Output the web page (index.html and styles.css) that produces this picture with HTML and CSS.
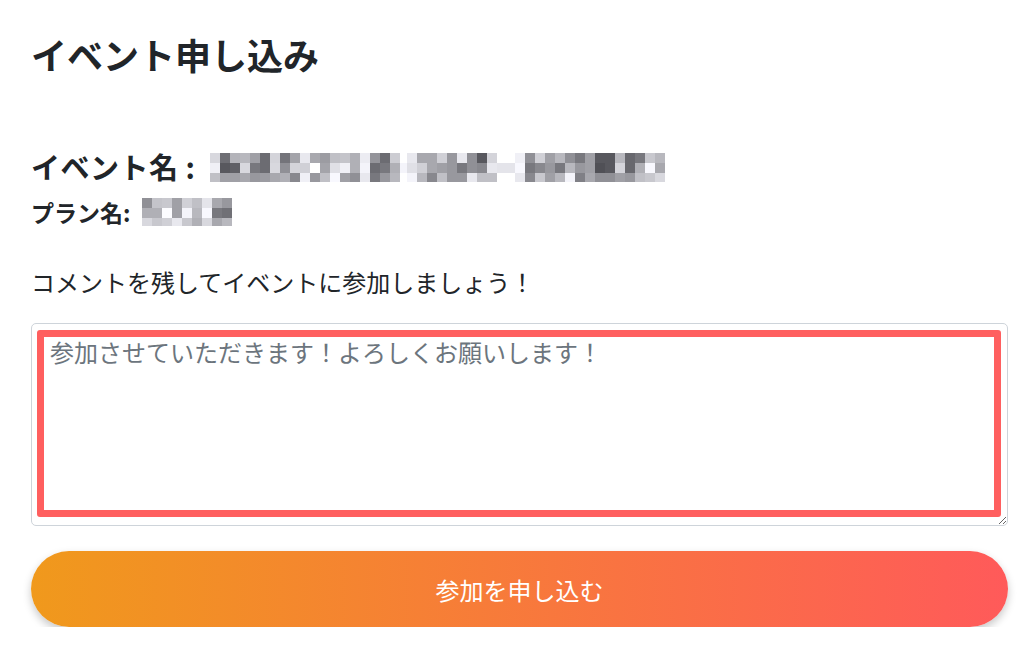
FILE: index.html
```html
<!DOCTYPE html>
<html lang="ja">
<head>
  <meta charset="UTF-8">
  <title>イベント申し込み</title>
  <meta name="viewport" content="width=device-width, initial-scale=1.0">
  <link rel="stylesheet" href="styles.css">
</head>
<body>

  <div class="page">
    <h1 class="title">イベント申し込み</h1>

    <div class="event-name">
      <span>イベント名 :</span>
      <div class="mosaic mosaic-event" data-cells="d8 6e b4 b8 a0 6c d4 74 a4 e8 a8 9c c0 c4 b0 ec 94 6c cc ff e8 a8 a8 d0 98 e8 90 58 d4 ff f0 90 d0 a0 b8 90 78 a0 58 58 b8 68 78 c8 b8|f0 58 60 d8 78 6c d8 90 d4 d0 ff a4 e0 f0 b0 f4 6c 78 b0 f4 e0 d0 a8 a0 98 78 90 88 e8 e4 f8 78 88 98 78 b8 98 a0 50 58 d4 68 b0 f8 a8|c0 a0 a0 a8 98 9c a8 b0 88 f0 98 c0 f8 a0 90 e8 78 98 b8 ff f4 b8 88 c0 98 98 e8 c0 c0 ff e8 88 c8 a0 b8 f4 80 a8 90 90 a0 98 c0 c8 d8"></div>
    </div>

    <div class="plan-name">
      <span>プラン名:</span>
      <div class="mosaic mosaic-plan" data-cells="90 c4 c8 a0 d0 c0 e4 a8 98|b0 b0 fc a0 f4 b8 f8 78 70|d8 c8 d0 e8 c8 b0 d8 a8 b8"></div>
    </div>

    <p class="lead">コメントを残してイベントに参加しましょう！</p>

    <div class="comment-box">
      <textarea class="comment" placeholder="参加させていただきます！よろしくお願いします！"></textarea>
      <div class="highlight"></div>
    </div>

    <button class="submit">参加を申し込む</button>
  </div>

  <script>
    // fill the blurred (pixelated) name blocks
    document.querySelectorAll('.mosaic').forEach(function (box) {
      const rows = box.dataset.cells.split('|');
      rows.forEach(function (row) {
        row.trim().split(' ').forEach(function (v) {
          const n = parseInt(v, 16);
          const cell = document.createElement('span');
          const blue = Math.min(255, n + 6);
          cell.style.background = 'rgb(' + n + ',' + n + ',' + blue + ')';
          box.appendChild(cell);
        });
      });
    });
  </script>

</body>
</html>
```

FILE: styles.css
```css
body {
  margin: 0;
  background: #ffffff;
  color: #212529;
  font-family: "Noto Sans CJK JP", "Noto Sans", sans-serif;
}

.page {
  width: 977px;
  padding: 32px 0 0 31px;
}

.title {
  margin: 0;
  font-size: 36px;
  line-height: 44px;
  font-weight: bold;
}

.event-name {
  display: flex;
  align-items: center;
  gap: 14px;
  margin-top: 73px;
  font-size: 29px;
  line-height: 35px;
  font-weight: bold;
  letter-spacing: 0.5px;
}

.plan-name {
  display: flex;
  align-items: center;
  gap: 12px;
  margin-top: 14px;
  font-size: 23px;
  line-height: 28px;
  font-weight: bold;
}

.mosaic {
  display: grid;
}

.mosaic-event {
  grid-template-columns: repeat(19, 10px) 7px repeat(9, 10px) 18px repeat(15, 10px);
  grid-template-rows: 10px 10px 9px;
  margin-top: 2px;
}

.mosaic-plan {
  grid-template-columns: repeat(9, 10px);
  grid-template-rows: 10px 10px 8px;
}

.lead {
  margin: 38px 0 0;
  font-size: 24px;
  line-height: 36px;
}

.comment-box {
  position: relative;
  margin-top: 23px;
}

.comment {
  display: block;
  box-sizing: border-box;
  width: 100%;
  height: 203px;
  margin: 0;
  padding: 10px 18px;
  border: 1px solid #ced4da;
  border-radius: 5px;
  font-family: inherit;
  font-size: 24px;
  line-height: 36px;
  color: #212529;
}

.comment::placeholder {
  color: #6c757d;
}

.highlight {
  position: absolute;
  left: 6px;
  top: 7px;
  width: 964px;
  height: 187px;
  box-sizing: border-box;
  border: 7px solid #ff5f5f;
  border-radius: 3px;
  pointer-events: none;
}

.submit {
  display: block;
  width: 100%;
  height: 76px;
  margin-top: 25px;
  border: none;
  border-radius: 38px;
  background: linear-gradient(to right, #f0991c, #ff5a5a);
  box-shadow: 0 4px 9px rgba(0, 0, 0, 0.22);
  color: #ffffff;
  font-family: inherit;
  font-size: 24px;
  cursor: pointer;
}
```
